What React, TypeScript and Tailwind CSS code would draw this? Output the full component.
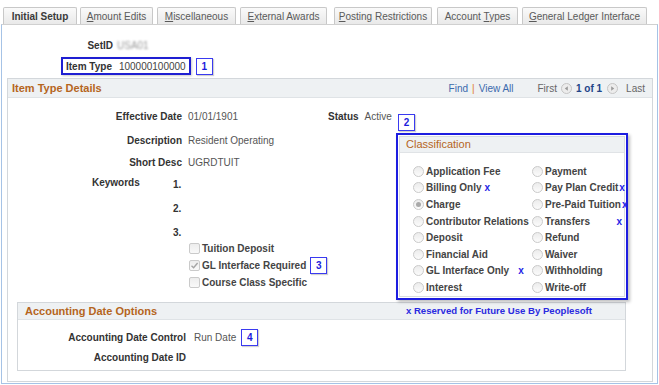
import React from 'react';

type Tab = {pre: string; ul: string; post: string; w: string; ml: string; active?: boolean};

const tabs: Tab[] = [
  {pre: 'Initial Setup', ul: '', post: '', w: 'w-[74px]', ml: 'ml-[3px]', active: true},
  {pre: '', ul: 'A', post: 'mount Edits', w: 'w-[73px]', ml: 'ml-[3px]'},
  {pre: '', ul: 'M', post: 'iscellaneous', w: 'w-[79px]', ml: 'ml-[4px]'},
  {pre: '', ul: 'E', post: 'xternal Awards', w: 'w-[87px]', ml: 'ml-[4px]'},
  {pre: '', ul: 'P', post: 'osting Restrictions', w: 'w-[98px]', ml: 'ml-[7px]'},
  {pre: 'Account\u00a0', ul: 'T', post: 'ypes', w: 'w-[81px]', ml: 'ml-[5px]'},
  {pre: '', ul: 'G', post: 'eneral Ledger Interface', w: 'w-[125px]', ml: 'ml-[4px]'},
];

type Opt = {label: string; on?: boolean; x?: 'tight' | 'wide' | 'end'};

const leftOpts: Opt[] = [
  {label: 'Application Fee'},
  {label: 'Billing Only', x: 'tight'},
  {label: 'Charge', on: true},
  {label: 'Contributor Relations'},
  {label: 'Deposit'},
  {label: 'Financial Aid'},
  {label: 'GL Interface Only', x: 'wide'},
  {label: 'Interest'},
];

const rightOpts: Opt[] = [
  {label: 'Payment'},
  {label: 'Pay Plan Credit', x: 'end'},
  {label: 'Pre-Paid Tuition', x: 'end'},
  {label: 'Transfers', x: 'end'},
  {label: 'Refund'},
  {label: 'Waiver'},
  {label: 'Withholding'},
  {label: 'Write-off'},
];

const Tag = ({n, className = ''}: {n: string; className?: string}) => (
  <span
    className={`flex h-[17px] w-[17px] shrink-0 items-center justify-center border-[1.5px] border-[#3a3af0] bg-white text-[10px] font-bold text-[#1c1cdc] shadow-[1px_1px_1px_rgba(0,0,0,0.18)] ${className}`}
  >
    {n}
  </span>
);

const Radio = ({on}: {on?: boolean}) => (
  <span className="flex h-[11px] w-[11px] shrink-0 items-center justify-center rounded-full border border-[#cacaca] bg-gradient-to-b from-[#ececec] to-[#fbfbfb]">
    {on && <span className="h-[5px] w-[5px] rounded-full bg-[#a9a9a9]" />}
  </span>
);

const Check = ({on}: {on?: boolean}) => (
  <span className="flex h-[11px] w-[11px] shrink-0 items-center justify-center rounded-[2px] border border-[#cacaca] bg-gradient-to-b from-[#ededed] to-[#f9f9f9]">
    {on && (
      <svg width="9" height="9" viewBox="0 0 9 9">
        <path d="M1.5 4.8 L3.6 6.8 L7.6 2" fill="none" stroke="#a5a5a5" strokeWidth="1.4" />
      </svg>
    )}
  </span>
);

const Arrow = ({dir}: {dir: 'l' | 'r'}) => (
  <svg width="11" height="11" viewBox="0 0 11 11">
    <circle cx="5.5" cy="5.5" r="5" fill="#ececec" stroke="#c4c4c4" />
    {dir === 'l' ? <path d="M6.8 3.2 L3.8 5.5 L6.8 7.8 Z" fill="#9a9a9a" /> : <path d="M4.2 3.2 L7.2 5.5 L4.2 7.8 Z" fill="#9a9a9a" />}
  </svg>
);

const XMark = ({className = ''}: {className?: string}) => (
  <span className={`text-[10px] font-bold text-[#2424e6] ${className}`}>x</span>
);

const OptRow = ({o}: {o: Opt}) => (
  <div className="flex h-[16.6px] items-center whitespace-nowrap">
    <Radio on={o.on} />
    <span className="ml-[2px] text-[10px] font-bold text-[#444]">{o.label}</span>
    {o.x === 'tight' && <XMark className="ml-[3px]" />}
    {o.x === 'wide' && <XMark className="ml-[9px]" />}
    {o.x === 'end' && <XMark className="ml-auto pl-[1px]" />}
  </div>
);

export default function App() {
  return (
    <div className="h-[385px] w-[659px] overflow-hidden bg-white font-['Liberation_Sans',Arial,sans-serif] text-[10px] text-[#333]">
      {/* tabs */}
      <div className="flex h-[24px] items-end">
        {tabs.map((t, i) => (
          <div
            key={i}
            className={`flex h-[17px] items-center justify-center whitespace-nowrap rounded-t-[2px] border border-b-0 border-[#c8c8c8] bg-gradient-to-b from-[#fafafa] to-[#e9e9e9] text-[10px] ${t.w} ${t.ml} ${
              t.active ? 'font-bold text-[#3a3a3a]' : 'text-[#5a5a5a]'
            }`}
          >
            <span>
              {t.pre}
              {t.ul && <span className="underline">{t.ul}</span>}
              {t.post}
            </span>
          </div>
        ))}
      </div>

      <div className="ml-[1px] h-[360px] w-[657px] border border-[#a6c3e6] border-t-[#d0d0d0]">
        {/* SetID */}
        <div className="mt-[13px] flex h-[14px] items-center">
          <span className="w-[111px] text-right font-bold">SetID</span>
          <span className="ml-[4px] text-[#9a9a9a] blur-[1.2px]">USA01</span>
        </div>

        {/* Item type */}
        <div className="mt-[5px] flex items-center">
          <div className="ml-[59px] flex h-[18px] items-center whitespace-nowrap border-2 border-[#1f1fd2] px-[3px] shadow-[1px_1px_2px_rgba(0,0,0,0.2)]">
            <span className="font-bold">Item Type</span>
            <span className="ml-[7px] text-[#444]">100000100000</span>
          </div>
          <Tag n="1" className="ml-[5px]" />
        </div>

        {/* Item Type Details group */}
        <div className="ml-[5px] mt-[3px] h-[304px] w-[646px] border border-[#d3d7db]">
          <div className="flex h-[19px] items-center justify-between border-b border-[#dfe3e6] bg-[#eef1f3] pl-[4px] pr-[7px]">
            <span className="text-[11px] font-bold text-[#b5651d]">Item Type Details</span>
            <div className="flex items-center text-[10px]">
              <span className="text-[#3b6aad]">Find</span>
              <span className="mx-[4px] text-[#e07a22]">|</span>
              <span className="text-[#3b6aad]">View All</span>
              <span className="ml-[24px] text-[#666]">First</span>
              <span className="ml-[4px]">
                <Arrow dir="l" />
              </span>
              <span className="ml-[4px] font-bold text-[#224488]">1 of 1</span>
              <span className="ml-[5px]">
                <Arrow dir="r" />
              </span>
              <span className="ml-[8px] text-[#666]">Last</span>
            </div>
          </div>

          <div className="flex">
            {/* left column */}
            <div className="w-[388px] pt-[11px]">
              <div className="flex h-[14px] items-center">
                <span className="w-[174px] text-right font-bold">Effective Date</span>
                <span className="ml-[6px] w-[140px] text-[#555]">01/01/1901</span>
                <span className="font-bold">Status</span>
                <span className="ml-[6px] text-[#555]">Active</span>
              </div>
              <div className="mt-[10px] flex h-[14px] items-center">
                <span className="w-[174px] text-right font-bold">Description</span>
                <span className="ml-[6px] text-[#555]">Resident Operating</span>
              </div>
              <div className="mt-[8px] flex h-[14px] items-center">
                <span className="w-[174px] text-right font-bold">Short Desc</span>
                <span className="ml-[6px] text-[#555]">UGRDTUIT</span>
              </div>
              <div className="mt-[6px] flex items-start">
                <span className="ml-[84px] flex h-[14px] w-[46px] items-center font-bold">Keywords</span>
                <div className="ml-[35px] flex flex-col gap-[10px] pt-[2px] font-bold">
                  <span className="flex h-[14px] items-center">1.</span>
                  <span className="flex h-[14px] items-center">2.</span>
                  <span className="flex h-[14px] items-center">3.</span>
                </div>
              </div>
              <div className="ml-[181px] mt-[1px] flex flex-col">
                <div className="flex h-[17px] items-center gap-[2px]">
                  <Check />
                  <span className="font-bold text-[#444]">Tuition Deposit</span>
                </div>
                <div className="flex h-[17px] items-center gap-[2px]">
                  <Check on />
                  <span className="font-bold text-[#444]">GL Interface Required</span>
                  <Tag n="3" className="ml-[2px]" />
                </div>
                <div className="flex h-[17px] items-center gap-[2px]">
                  <Check />
                  <span className="font-bold text-[#444]">Course Class Specific</span>
                </div>
              </div>
            </div>

            {/* right column: classification */}
            <div className="pt-[16px]">
              <Tag n="2" className="ml-[2px]" />
              <div className="mt-[2px] h-[167px] w-[232px] border-2 border-[#1d1de0] p-[1px] shadow-[2px_2px_3px_rgba(0,0,0,0.25)]">
                <div className="h-full border border-[#d8dce0]">
                  <div className="flex h-[16px] items-center border-b border-[#e0e3e6] bg-[#eef1f3] pl-[6px] text-[11px] text-[#b5651d]">
                    Classification
                  </div>
                  <div className="grid grid-cols-[119px_90px] pl-[13px] pt-[10px]">
                    <div className="flex flex-col">
                      {leftOpts.map((o) => (
                        <OptRow key={o.label} o={o} />
                      ))}
                    </div>
                    <div className="flex flex-col">
                      {rightOpts.map((o) => (
                        <OptRow key={o.label} o={o} />
                      ))}
                    </div>
                  </div>
                </div>
              </div>
            </div>
          </div>

          {/* Accounting Date Options */}
          <div className="ml-[9px] mt-[2px] h-[69px] w-[609px] border border-[#d3d7db]">
            <div className="flex h-[17px] items-center justify-between border-b border-[#dfe3e6] bg-[#eef1f3] pl-[7px] pr-[33px]">
              <span className="text-[11px] font-bold text-[#b5651d]">Accounting Date Options</span>
              <span className="text-[9.6px] font-bold text-[#2a2ae0]">x Reserved for Future Use By Peoplesoft</span>
            </div>
            <div className="pt-[9px]">
              <div className="flex h-[16px] items-center">
                <span className="w-[168px] text-right font-bold">Accounting Date Control</span>
                <span className="ml-[8px] text-[#555]">Run Date</span>
                <Tag n="4" className="ml-[5px]" />
              </div>
              <div className="mt-[5px] flex h-[14px] items-center">
                <span className="w-[168px] text-right font-bold">Accounting Date ID</span>
              </div>
            </div>
          </div>
        </div>
      </div>
    </div>
  );
}
